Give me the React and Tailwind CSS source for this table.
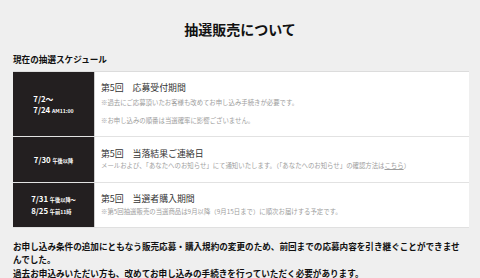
import React from "react";

const rows = [
  {
    h: "h-[64px]",
    date: (
      <>
        <div>7/2～</div>
        <div>
          7/24 <span className="text-[5.2px]">AM11:00</span>
        </div>
      </>
    ),
    title: "第5回　応募受付期間",
    notes: (
      <>
        <p className="mt-[3px]">※過去にご応募頂いたお客様も改めてお申し込み手続きが必要です。</p>
        <p className="mt-[6px]">※お申し込みの順番は当選確率に影響ございません。</p>
      </>
    ),
  },
  {
    h: "h-[45px]",
    date: (
      <div>
        7/30 <span className="text-[5.2px]">午後以降</span>
      </div>
    ),
    title: "第5回　当落結果ご連絡日",
    notes: (
      <p>
        メールおよび、「あなたへのお知らせ」にて通知いたします。（「あなたへのお知らせ」の確認方法は
        <span className="underline">こちら</span>）
      </p>
    ),
  },
  {
    h: "h-[44px]",
    date: (
      <>
        <div>
          7/31 <span className="text-[5.2px]">午後以降～</span>
        </div>
        <div>
          8/25 <span className="text-[5.2px]">午前11時</span>
        </div>
      </>
    ),
    title: "第5回　当選者購入期間",
    notes: <p className="mt-[1px]">※第5回抽選販売の当選商品は9月以降（9月15日まで）に順次お届けする予定です。</p>,
  },
];

export default function App() {
  return (
    <div className="w-[480px] h-[278px] overflow-hidden bg-[#efefef] font-['Noto_Sans_CJK_JP','Noto_Sans',sans-serif] text-[#111]">
      <h1 className="pt-[20px] text-center text-[14px] leading-[18px] font-bold">抽選販売について</h1>

      <h2 className="mt-[15px] pl-[13px] text-[8.6px] leading-[12px] font-bold">現在の抽選スケジュール</h2>

      {/* schedule table */}
      <div className="mt-[6px] ml-[13px] w-[456px] flex flex-col gap-px bg-[#e2e2e2] border-t border-[#dcdcdc] shadow-[0_1px_0_#e0e0e0]">
        {rows.map((r, i) => (
          <div key={i} className={`flex ${r.h}`}>
            <div className="w-[81px] shrink-0 bg-[#231f20] flex items-center justify-center">
              <div className="text-white font-bold text-[7.8px] leading-[11px]">{r.date}</div>
            </div>
            <div className="flex-1 bg-white flex flex-col justify-center pl-[6px] border-l border-[#cfcfcf]">
              <div className="text-[8.9px] leading-[12px] text-[#333]">{r.title}</div>
              <div className="text-[6.4px] leading-[12px] text-[#9d9d9d]">{r.notes}</div>
            </div>
          </div>
        ))}
      </div>

      <div className="mt-[13px] px-[13px] text-[8.6px] leading-[13px] font-bold">
        <p>お申し込み条件の追加にともなう販売応募・購入規約の変更のため、前回までの応募内容を引き継ぐことができませんでした。</p>
        <p className="mt-[1px]">過去お申込みいただい方も、改めてお申し込みの手続きを行っていただく必要があります。</p>
      </div>
    </div>
  );
}
